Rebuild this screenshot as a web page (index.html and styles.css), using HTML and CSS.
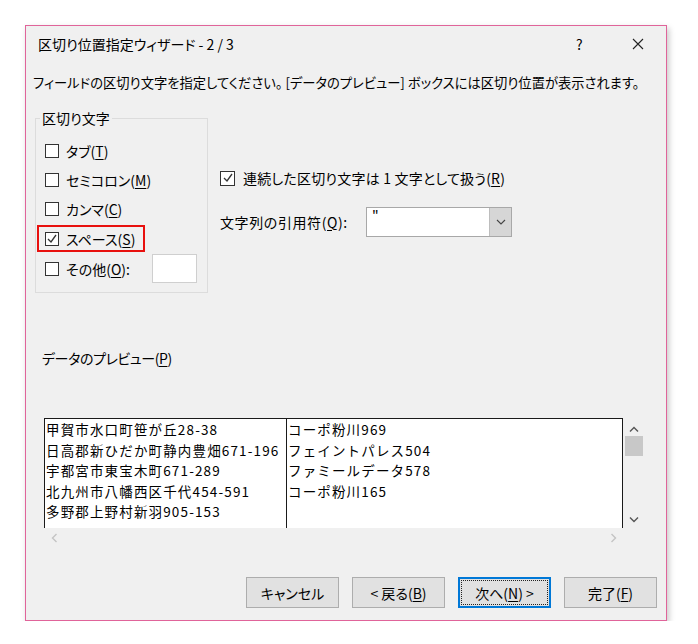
FILE: index.html
```html
<!DOCTYPE html>
<html lang="ja">
<head>
    <meta charset="UTF-8">
    <title>区切り位置指定ウィザード</title>
    <link rel="stylesheet" href="styles.css">
</head>
<body>

<div class="dialog">
    <!-- Title bar -->
    <div class="titlebar">
        <span class="title">区切り位置指定ウィザード - 2 / 3</span>
        <span class="help">?</span>
        <span class="close">
            <svg width="12" height="12" viewBox="0 0 12 12"><path d="M1 1 L11 11 M11 1 L1 11" stroke="#222" stroke-width="1.1" fill="none"/></svg>
        </span>
    </div>

    <div class="content">
        <p class="intro">フィールドの区切り文字を指定してください。 [データのプレビュー] ボックスには区切り位置が表示されます。</p>

        <div class="options">
            <fieldset class="group">
                <legend>区切り文字</legend>
                <div class="check"><span class="box"></span><span>タブ(<u>T</u>)</span></div>
                <div class="check"><span class="box"></span><span>セミコロン(<u>M</u>)</span></div>
                <div class="check"><span class="box"></span><span>カンマ(<u>C</u>)</span></div>
                <div class="check highlight"><span class="box checked"><svg width="12" height="12" viewBox="0 0 12 12"><path d="M2 6 L5 9 L10 2" stroke="#333" stroke-width="1.3" fill="none"/></svg></span><span>スペース(<u>S</u>)</span></div>
                <div class="check other"><span class="box"></span><span>その他(<u>O</u>):</span><span class="textbox"></span></div>
            </fieldset>

            <div class="side">
                <div class="check"><span class="box checked"><svg width="12" height="12" viewBox="0 0 12 12"><path d="M2 6 L5 9 L10 2" stroke="#333" stroke-width="1.3" fill="none"/></svg></span><span>連続した区切り文字は 1 文字として扱う(<u>R</u>)</span></div>
                <div class="quote-row">
                    <span class="quote-label">文字列の引用符(<u>Q</u>):</span>
                    <div class="combo">
                        <span class="value">"</span>
                        <span class="drop"><svg width="10" height="6" viewBox="0 0 10 6"><path d="M1 1 L5 5 L9 1" stroke="#444" stroke-width="1.1" fill="none"/></svg></span>
                    </div>
                </div>
            </div>
        </div>

        <div class="preview-label">データのプレビュー(<u>P</u>)</div>

        <!-- Data preview -->
        <div class="preview">
            <div class="preview-main">
                <div class="grid">
                    <div class="col col-addr">
                        <div>甲賀市水口町笹が丘28-38</div>
                        <div>日高郡新ひだか町静内豊畑671-196</div>
                        <div>宇都宮市東宝木町671-289</div>
                        <div>北九州市八幡西区千代454-591</div>
                        <div>多野郡上野村新羽905-153</div>
                    </div>
                    <div class="col col-name">
                        <div>コーポ粉川969</div>
                        <div>フェイントパレス504</div>
                        <div>ファミールデータ578</div>
                        <div>コーポ粉川165</div>
                    </div>
                </div>
                <div class="vscroll">
                    <svg class="arrow" width="10" height="7" viewBox="0 0 10 7"><path d="M1 5.5 L5 1.5 L9 5.5" stroke="#555" stroke-width="1.4" fill="none"/></svg>
                    <div class="thumb"></div>
                    <span class="spacer"></span>
                    <svg class="arrow" width="10" height="7" viewBox="0 0 10 7"><path d="M1 1.5 L5 5.5 L9 1.5" stroke="#555" stroke-width="1.4" fill="none"/></svg>
                </div>
            </div>
            <div class="hscroll">
                <svg width="7" height="10" viewBox="0 0 7 10"><path d="M5.5 1 L1.5 5 L5.5 9" stroke="#c4c4c4" stroke-width="1.4" fill="none"/></svg>
                <svg width="7" height="10" viewBox="0 0 7 10"><path d="M1.5 1 L5.5 5 L1.5 9" stroke="#c4c4c4" stroke-width="1.4" fill="none"/></svg>
            </div>
        </div>

        <!-- Buttons -->
        <div class="buttons">
            <button class="btn">キャンセル</button>
            <button class="btn">&lt; 戻る(<u>B</u>)</button>
            <button class="btn primary"><span class="focus">次へ(<u>N</u>) &gt;</span></button>
            <button class="btn">完了(<u>F</u>)</button>
        </div>
    </div>
</div>

</body>
</html>
```

FILE: styles.css
```css
/* Basic reset */
* {
    box-sizing: border-box;
    margin: 0;
    padding: 0;
}

:root {
    --dialog-bg: #f0f0f0;
    --accent-pink: #e0649a;
    --line-grey: #dcdcdc;
    --focus-blue: #0078d7;
}

body {
    font-family: "Noto Sans CJK JP", "Noto Sans", sans-serif;
    font-size: 14px;
    font-feature-settings: "palt";
    color: #000;
    background: #fff;
    padding: 25px 0 0 25px;
}

u {
    text-decoration: underline;
    text-underline-offset: 2px;
}

/* Dialog frame */
.dialog {
    width: 642px;
    background: var(--dialog-bg);
    border: 1px solid var(--accent-pink);
    box-shadow: 2px 3px 6px rgba(0, 0, 0, 0.22);
    display: flex;
    flex-direction: column;
}

.titlebar {
    height: 36px;
    display: flex;
    align-items: center;
    padding-left: 12px;
}

.title {
    flex: 1;
    line-height: 16px;
}

.help {
    font-size: 14px;
    width: 46px;
}

.close {
    display: flex;
    width: 44px;
    padding-left: 10px;
}

.content {
    padding: 12px 9px 12px 7px;
    display: flex;
    flex-direction: column;
}

.intro {
    font-size: 13.3px;
    line-height: 18px;
    white-space: nowrap;
}

/* Delimiter options */
.options {
    display: flex;
    gap: 12px;
    margin-top: 18px;
}

.group {
    width: 173px;
    margin-left: 2px;
    border: 1px solid var(--line-grey);
    padding: 10px 10px 7px 9px;
}

.group legend {
    line-height: 16px;
    padding: 0 2px;
    margin-left: -5px;
}

.check {
    display: flex;
    align-items: center;
    height: 29px;
    gap: 7px;
    width: fit-content;
    white-space: nowrap;
}

.box {
    width: 14px;
    height: 14px;
    flex: none;
    border: 1px solid #333;
    background: #fff;
    display: flex;
    align-items: center;
    justify-content: center;
}

.check.highlight {
    height: 27px;
    margin-top: 2px;
    margin-left: -8px;
    padding: 0 8px 0 6px;
    border: 2px solid #e8100e;
}

.check.other {
    height: 33px;
    width: 100%;
}

.textbox {
    width: 45px;
    height: 29px;
    margin-left: auto;
    background: #fff;
    border: 1px solid #cfcfcf;
}

.side {
    padding-top: 58px;
}

.side .check {
    height: 20px;
    gap: 8px;
    letter-spacing: 0.2px;
}

.side .box {
    width: 15px;
    height: 15px;
}

.quote-row {
    display: flex;
    align-items: center;
    margin-top: 19px;
}

.quote-label {
    width: 146px;
    letter-spacing: 0.6px;
}

.combo {
    width: 146px;
    height: 30px;
    border: 1px solid #a8a8a8;
    background: #fff;
    display: flex;
}

.combo .value {
    flex: 1;
    padding: 2px 0 0 5px;
    line-height: 12px;
}

.combo .drop {
    width: 22px;
    background: #d6d6d6;
    border-left: 1px solid #bdbdbd;
    display: flex;
    align-items: center;
    justify-content: center;
}

.preview-label {
    line-height: 16px;
    margin-top: 57px;
    margin-left: 9px;
    letter-spacing: -0.4px;
}

/* Data preview list */
.preview {
    margin: 52px 14px 0 11px;
}

.preview-main {
    display: flex;
}

.grid {
    width: 580px;
    height: 110px;
    background: #fff;
    border: 1px solid #1a1a1a;
    border-bottom: none;
    display: flex;
    font-size: 13.5px;
    font-feature-settings: normal;
    letter-spacing: 1.15px;
    line-height: 20.5px;
    overflow: hidden;
}

.col {
    padding-left: 1px;
    white-space: nowrap;
}

.col-addr {
    width: 242px;
    border-right: 1px solid #1a1a1a;
}

.vscroll {
    width: 20px;
    display: flex;
    flex-direction: column;
    align-items: center;
    padding: 8px 0 5px 1px;
}

.thumb {
    width: 18px;
    height: 20px;
    background: #c8c8c8;
    margin-top: 3px;
}

.spacer {
    flex: 1;
}

.hscroll {
    width: 580px;
    height: 20px;
    display: flex;
    align-items: center;
    justify-content: space-between;
    padding: 0 7px 0 7px;
}

/* Bottom buttons */
.buttons {
    display: flex;
    justify-content: flex-end;
    gap: 13px;
    margin-top: 29px;
}

.btn {
    width: 93px;
    height: 31px;
    font-family: inherit;
    font-size: 14px;
    font-feature-settings: "palt";
    color: #000;
    background: #e1e1e1;
    border: 1px solid #adadad;
}

.btn.primary {
    border: 2px solid var(--focus-blue);
    padding: 1px;
}

.btn .focus {
    display: flex;
    align-items: center;
    justify-content: center;
    height: 100%;
    border: 1px dotted #222;
}
```
